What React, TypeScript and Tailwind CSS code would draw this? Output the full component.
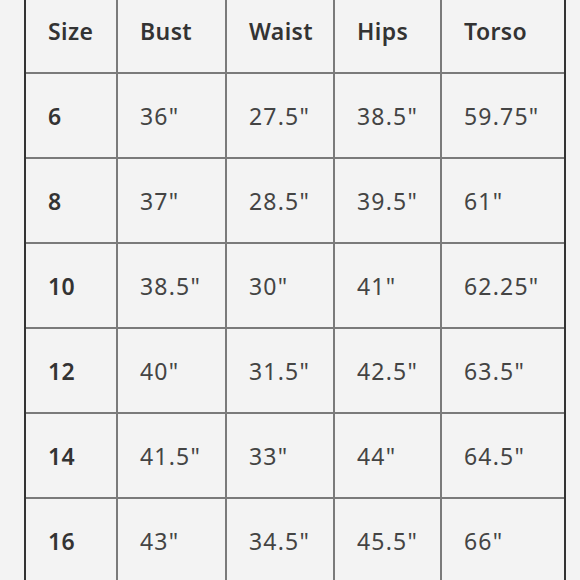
const headers = ['Size', 'Bust', 'Waist', 'Hips', 'Torso'];

const rows = [
  ['6', '36"', '27.5"', '38.5"', '59.75"'],
  ['8', '37"', '28.5"', '39.5"', '61"'],
  ['10', '38.5"', '30"', '41"', '62.25"'],
  ['12', '40"', '31.5"', '42.5"', '63.5"'],
  ['14', '41.5"', '33"', '44"', '64.5"'],
  ['16', '43"', '34.5"', '45.5"', '66"'],
];

function Row({ cells, header }: { cells: string[]; header?: boolean }) {
  return (
    <div className="grid grid-cols-[92px_109px_108px_107px_122px] h-[85px]">
      {cells.map((c, i) => (
        <div
          key={i}
          className={`flex items-center pl-[22px] pt-[2px] border-b-2 border-[#7a7a7a] ${
            i < cells.length - 1 ? 'border-r-2' : ''
          } ${
            header || i === 0
              ? 'font-semibold text-[#333333] tracking-[0.4px]'
              : 'font-normal text-[#444444] tracking-[1.2px]'
          }`}
        >
          {c}
        </div>
      ))}
    </div>
  );
}

export default function App() {
  return (
    <div
      className="w-[580px] h-[580px] overflow-hidden bg-[#f3f3f3] text-[23px]"
      style={{ fontFamily: '"Noto Sans", "Open Sans", sans-serif' }}
    >
      <div className="ml-[24px] w-[542px] -mt-[11px] border-l-2 border-r-2 border-[#333]">
        <Row cells={headers} header />
        {rows.map((r, i) => (
          <Row key={i} cells={r} />
        ))}
      </div>
    </div>
  );
}
